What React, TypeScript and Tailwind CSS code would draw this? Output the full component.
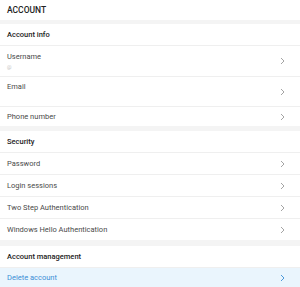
const Chevron = ({ blue }: { blue?: boolean }) => (
  <svg width="5" height="8" viewBox="0 0 5 8" className="shrink-0">
    <path d="M1 1l3 3-3 3" fill="none" stroke={blue ? "#3b8fd6" : "#9a9a9a"} strokeWidth="0.9" />
  </svg>
);

function SectionTitle({ title }: { title: string }) {
  return (
    <div className="flex h-[22px] items-center border-b border-[#efefef] bg-white px-[7px] text-[7.5px] font-medium text-[#222]">
      {title}
    </div>
  );
}

function Row({ label, sub, h, last }: { label: string; sub?: string; h: string; last?: boolean }) {
  return (
    <div
      className={`flex items-center justify-between bg-white pl-[7px] pr-[15px] ${h} ${last ? "" : "border-b border-[#efefef]"}`}
    >
      <div className="flex flex-col leading-[10px]">
        <span className="text-[7.5px] text-[#4a4a4a]">{label}</span>
        {sub !== undefined && <span className="mt-[1px] h-[8px] text-[5px] leading-[8px] text-[#c4c4c4]">{sub}</span>}
      </div>
      <Chevron />
    </div>
  );
}

export default function App() {
  return (
    <div className="flex h-[287px] w-[300px] flex-col overflow-hidden bg-[#f4f4f4] font-['Roboto',sans-serif]">
      <div className="flex h-[20px] shrink-0 items-center bg-white px-[7px] text-[8.5px] font-medium text-[#222]">ACCOUNT</div>
      <div className="mt-[4px] shrink-0">
        <SectionTitle title="Account info" />
        <Row label="Username" sub="@" h="h-[31px]" />
        <Row label="Email" sub="" h="h-[30px]" />
        <Row label="Phone number" h="h-[19px]" last />
      </div>
      <div className="mt-[5px] shrink-0">
        <SectionTitle title="Security" />
        <Row label="Password" h="h-[22px]" />
        <Row label="Login sessions" h="h-[22px]" />
        <Row label="Two Step Authentication" h="h-[22px]" />
        <Row label="Windows Hello Authentication" h="h-[21px]" last />
      </div>
      <div className="mt-[6px] flex flex-1 flex-col bg-white">
        <SectionTitle title="Account management" />
        <div className="flex flex-1 items-center justify-between bg-[#eaf5fd] pl-[7px] pr-[15px]">
          <span className="text-[7.5px] text-[#3b8fd6]">Delete account</span>
          <Chevron blue />
        </div>
      </div>
    </div>
  );
}
